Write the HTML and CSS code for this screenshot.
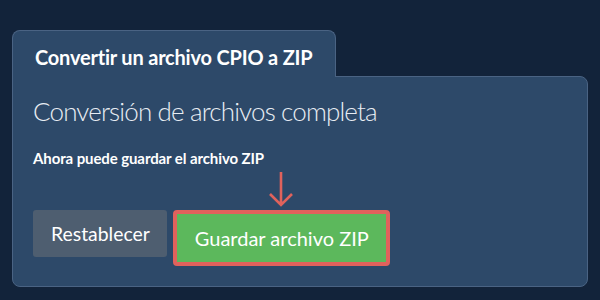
FILE: index.html
```html
<!DOCTYPE html>
<html>
<head>
  <title>Convertir CPIO a ZIP</title>
  <link rel="stylesheet" href="styles.css">
</head>
<body>
  <div class="card">
    <div class="tab">Convertir un archivo CPIO a ZIP</div>
    <div class="panel">
      <h2 class="title">Conversión de archivos completa</h2>
      <p class="note">Ahora puede guardar el archivo ZIP</p>
      <div class="actions">
        <button class="btn btn-reset">Restablecer</button>
        <div class="save-wrap">
          <svg class="pointer" width="26" height="36" viewBox="0 0 26 36">
            <path d="M13 1 L13 34 M2 23 L13 34 L24 23" fill="none" stroke="#e0625c" stroke-width="2.6"/>
          </svg>
          <button class="btn btn-save">Guardar archivo ZIP</button>
        </div>
      </div>
    </div>
  </div>
</body>
</html>
```

FILE: styles.css
```css
body {
  margin: 0;
  background-color: #12233a;
  font-family: Lato, "Open Sans", sans-serif;
  color: #fff;
}

.card {
  padding: 30px 12px 0 12px;
}

.tab {
  display: inline-block;
  position: relative;
  z-index: 1;
  width: 324px;
  height: 47px;
  box-sizing: border-box;
  padding: 14px 0 0 22px;
  margin-bottom: -1px;
  background-color: #2d4969;
  border: 1px solid #4a6383;
  border-bottom: none;
  border-radius: 8px 8px 0 0;
  font-size: 20px;
  font-weight: bold;
  line-height: 1.2;
  letter-spacing: -0.2px;
}

.panel {
  width: 576px;
  height: 211px;
  box-sizing: border-box;
  padding: 19px 20px 0 20px;
  background-color: #2d4969;
  border: 1px solid #4a6383;
  border-radius: 0 8px 8px 8px;
}

.title {
  margin: 0;
  font-size: 26px;
  font-weight: 300;
  line-height: 1.2;
  letter-spacing: -0.85px;
  color: #e8edf3;
}

.note {
  margin: 22px 0 0 0;
  font-size: 15px;
  font-weight: bold;
  line-height: 1.2;
  letter-spacing: -0.1px;
}

.actions {
  display: flex;
  align-items: flex-start;
  gap: 6px;
  margin-top: 43px;
}

.btn {
  font-family: Lato, "Open Sans", sans-serif;
  color: #fff;
  line-height: 1.2;
  border: none;
  border-radius: 3px;
  padding: 0 17px 0 18px;
}

.btn-reset {
  height: 47px;
  font-size: 19.4px;
  background-color: #4e5e70;
}

.save-wrap {
  position: relative;
}

.btn-save {
  height: 56px;
  font-size: 20px;
  background-color: #5cb85c;
  border: 4px solid #e0625c;
  border-radius: 4px;
}

.pointer {
  position: absolute;
  left: 50%;
  top: -39px;
  margin-left: -13px;
}
```
